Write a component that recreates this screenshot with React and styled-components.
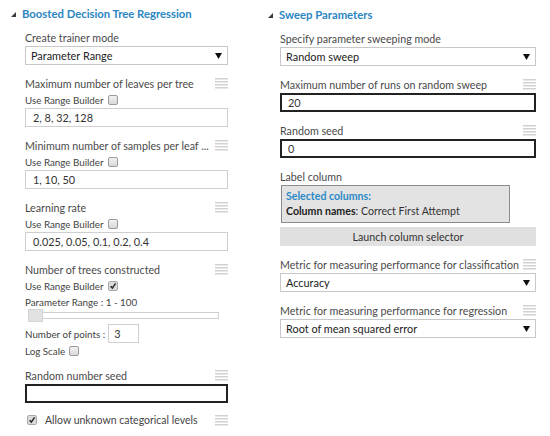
import styled, { createGlobalStyle } from 'styled-components'

const GlobalStyle = createGlobalStyle`
  body {
    margin: 0;
    background: #fff;
    font-family: Lato, "Liberation Sans", sans-serif;
    color: #444;
  }
`

function Hamburger() {
  return (
    <svg width="13" height="11" viewBox="0 0 13 11">
      {[0, 3, 6, 9].map((y) => (
        <rect key={y} x="0" y={y} width="13" height="1.5" fill="#d2d2d2" />
      ))}
    </svg>
  )
}

function Caret() {
  return (
    <svg width="7" height="6" viewBox="0 0 7 6">
      <polygon points="0,0 7,0 3.5,6" fill="#111" />
    </svg>
  )
}

function Check({ checked }) {
  return (
    <Box $checked={checked}>
      {checked && (
        <svg width="10" height="10" viewBox="0 0 10 10">
          <path d="M2 5.2 L4.2 7.6 L8.2 1.8" stroke="#222" strokeWidth="1.8" fill="none" />
        </svg>
      )}
    </Box>
  )
}

function Field({ label, children, menu = true }) {
  return (
    <FieldWrap>
      <LabelRow>
        <span>{label}</span>
        {menu && <Hamburger />}
      </LabelRow>
      {children}
    </FieldWrap>
  )
}

function Select({ value }) {
  return (
    <SelectBox>
      <span>{value}</span>
      <Caret />
    </SelectBox>
  )
}

function RangeField({ label, value }) {
  return (
    <Field label={label}>
      <SmallRow>Use Range Builder <Check /></SmallRow>
      <TextBox>{value}</TextBox>
    </Field>
  )
}

export default function App() {
  return (
    <>
      <GlobalStyle />
      <Page>
        <Column>
          <Header><Arrow /><span>Boosted Decision Tree Regression</span></Header>
          <Body $indent={17}>
            <Field label="Create trainer mode" menu={false}>
              <Select value="Parameter Range" />
            </Field>
            <RangeField label="Maximum number of leaves per tree" value="2, 8, 32, 128" />
            <RangeField label="Minimum number of samples per leaf ..." value="1, 10, 50" />
            <RangeField label="Learning rate" value="0.025, 0.05, 0.1, 0.2, 0.4" />
            <FieldWrap $gap={0}>
              <LabelRow>
                <span>Number of trees constructed</span>
                <Hamburger />
              </LabelRow>
              <SmallRow>Use Range Builder <Check checked /></SmallRow>
              <SmallRow>Parameter Range : 1 - 100</SmallRow>
              <Slider><Thumb /></Slider>
              <PointsRow>Number of points : <PointsBox>3</PointsBox></PointsRow>
              <SmallRow>Log Scale <Check /></SmallRow>
            </FieldWrap>
            <FieldWrap $top={7} $gap={8}>
              <LabelRow>
                <span>Random number seed</span>
                <Hamburger />
              </LabelRow>
              <TextBox $strong />
            </FieldWrap>
            <LabelRow>
              <CheckLabel><Check checked /> Allow unknown categorical levels</CheckLabel>
              <Hamburger />
            </LabelRow>
          </Body>
        </Column>
        <Column>
          <Header $top={1}><Arrow /><span>Sweep Parameters</span></Header>
          <Body $indent={15}>
            <Field label="Specify parameter sweeping mode" menu={false}>
              <Select value="Random sweep" />
            </Field>
            <Field label="Maximum number of runs on random sweep">
              <TextBox $strong>20</TextBox>
            </Field>
            <Field label="Random seed">
              <TextBox $strong>0</TextBox>
            </Field>
            <Field label="Label column" menu={false}>
              <ColumnsBox>
                <SelectedTitle>Selected columns:</SelectedTitle>
                <div><b>Column names</b>: Correct First Attempt</div>
              </ColumnsBox>
              <LaunchButton>Launch column selector</LaunchButton>
            </Field>
            <Field label="Metric for measuring performance for classification">
              <Select value="Accuracy" />
            </Field>
            <Field label="Metric for measuring performance for regression">
              <Select value="Root of mean squared error" />
            </Field>
          </Body>
        </Column>
      </Page>
    </>
  )
}

const Page = styled.div`
  display: grid;
  grid-template-columns: 220px 271px;
  column-gap: 37px;
  padding: 4px 0 0 8px;
`

const Column = styled.div`
  display: flex;
  flex-direction: column;
`

const Header = styled.div`
  display: flex;
  align-items: center;
  gap: 6px;
  height: 18px;
  margin-top: ${(p) => p.$top || 0}px;
  padding-left: 3px;
  font-size: 11.3px;
  font-weight: 700;
  color: #2b86c2;
`

const Arrow = styled.span`
  width: 0;
  height: 0;
  border-left: 5px solid transparent;
  border-bottom: 5px solid #3a3a3a;
  margin-top: 2px;
`

const Body = styled.div`
  display: flex;
  flex-direction: column;
  padding-left: ${(p) => p.$indent}px;
  margin-top: 6px;
`

const FieldWrap = styled.div`
  display: flex;
  flex-direction: column;
  margin-top: ${(p) => p.$top || 0}px;
  margin-bottom: ${(p) => (p.$gap === undefined ? 9 : p.$gap)}px;
`

const LabelRow = styled.div`
  display: flex;
  align-items: center;
  justify-content: space-between;
  gap: 4px;
  height: 18px;
  font-size: 10.7px;
  color: #4a4a4a;
  white-space: nowrap;
`

const SmallRow = styled.div`
  display: flex;
  align-items: center;
  gap: 4px;
  height: 16px;
  font-size: 9.8px;
  color: #444;
`

const Box = styled.span`
  display: inline-flex;
  align-items: center;
  justify-content: center;
  width: 10px;
  height: 10px;
  border: 1px solid #9a9a9a;
  border-radius: 2px;
  background: linear-gradient(#f2f2f2, #d8d8d8);
  box-sizing: border-box;
  ${(p) => p.$checked && 'background: #dcdcdc; border-color: #aaa;'}
`

const SelectBox = styled.div`
  display: flex;
  align-items: center;
  justify-content: space-between;
  height: 19px;
  box-sizing: border-box;
  border: 1px solid #c8c8c8;
  padding: 0 5px 0 5px;
  font-size: 10.9px;
  color: #222;
  background: #fff;
`

const TextBox = styled.div`
  display: flex;
  align-items: center;
  height: 19px;
  box-sizing: border-box;
  border: ${(p) => (p.$strong ? '2px solid #222' : '1px solid #cfcfcf')};
  padding: 0 ${(p) => (p.$strong ? 6 : 7)}px;
  font-size: 10.9px;
  color: #333;
  background: #fff;
`

const Slider = styled.div`
  position: relative;
  margin: 2px 0 5px 3px;
  width: 191px;
  height: 7px;
  border: 1px solid #d0d0d0;
  box-sizing: border-box;
  background: #fff;
`

const Thumb = styled.div`
  position: absolute;
  left: -1px;
  top: -4px;
  width: 15px;
  height: 13px;
  background: #e2e2e2;
  border: 1px solid #d4d4d4;
  box-sizing: border-box;
`

const PointsRow = styled.div`
  display: flex;
  align-items: center;
  gap: 3px;
  font-size: 9.8px;
  color: #444;
`

const PointsBox = styled.div`
  width: 31px;
  height: 19px;
  box-sizing: border-box;
  border: 1px solid #cfcfcf;
  padding-left: 5px;
  display: flex;
  align-items: center;
  font-size: 10.9px;
  color: #333;
`

const CheckLabel = styled.span`
  display: flex;
  align-items: center;
  gap: 8px;
  padding-left: 2px;
  font-size: 10.5px;
  color: #444;
`

const ColumnsBox = styled.div`
  width: 229px;
  height: 38px;
  box-sizing: border-box;
  margin-left: 1px;
  border: 1px solid #8c8c8c;
  background: #e3e3e3;
  padding: 3px 4px;
  font-size: 10.6px;
  color: #333;
  line-height: 15px;
  b {
    color: #222;
    font-weight: 700;
  }
`

const SelectedTitle = styled.div`
  font-weight: 700;
  color: #2b8ac6;
`

const LaunchButton = styled.div`
  margin-top: 4px;
  height: 19px;
  display: flex;
  align-items: center;
  justify-content: center;
  background: #e0e0e0;
  font-size: 10.7px;
  color: #333;
`
